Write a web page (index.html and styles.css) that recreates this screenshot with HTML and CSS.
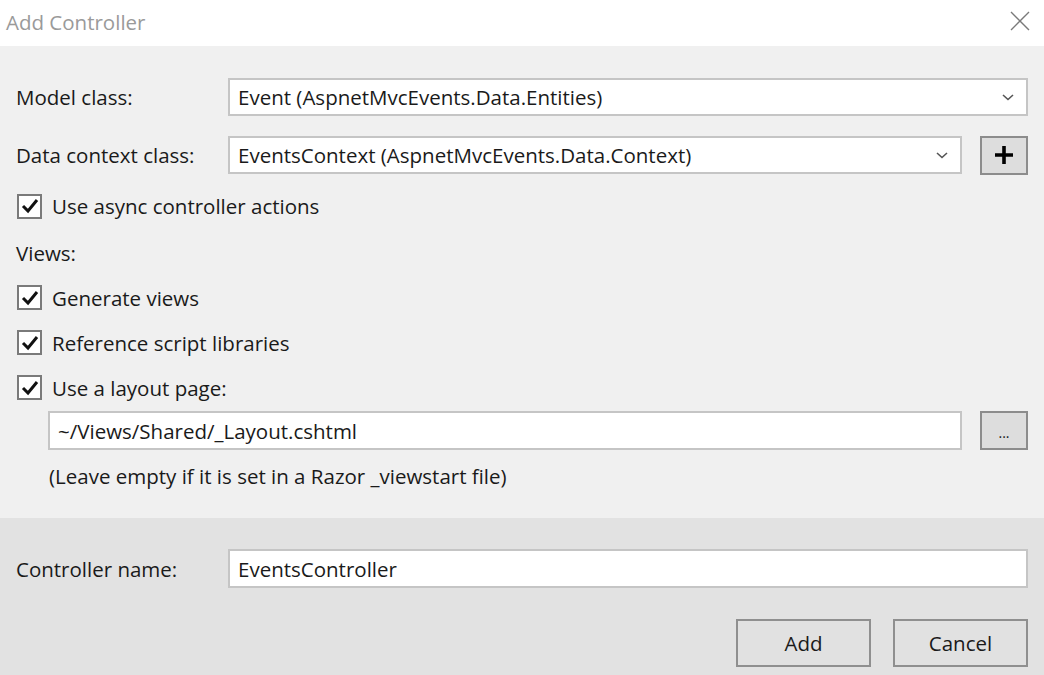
FILE: index.html
```html
<!DOCTYPE html>
<html>
<head>
<meta charset="utf-8">
<link rel="stylesheet" href="styles.css">
</head>
<body>
<div class="dialog">
  <div class="titlebar">
    <span class="title">Add Controller</span>
    <svg class="close" width="20" height="20" viewBox="0 0 20 20"><path d="M1 1 L19 19 M19 1 L1 19" stroke="#7a7a7a" stroke-width="1.4" fill="none"/></svg>
  </div>
  <div class="main">
    <div class="row field-row">
      <span class="label">Model class:</span>
      <div class="select grow"><span>Event (AspnetMvcEvents.Data.Entities)</span><svg class="chev" width="12" height="7" viewBox="0 0 12 7"><path d="M1 1 L6 5.5 L11 1" stroke="#555" stroke-width="1.6" fill="none"/></svg></div>
    </div>
    <div class="row field-row second">
      <span class="label">Data context class:</span>
      <div class="select grow"><span>EventsContext (AspnetMvcEvents.Data.Context)</span><svg class="chev" width="12" height="7" viewBox="0 0 12 7"><path d="M1 1 L6 5.5 L11 1" stroke="#555" stroke-width="1.6" fill="none"/></svg></div>
      <div class="sqbtn"><svg width="20" height="20" viewBox="0 0 20 20"><path d="M10 1 V19 M1 10 H19" stroke="#000" stroke-width="3.6" fill="none"/></svg></div>
    </div>
    <div class="check-row first"><span class="box"><svg width="18" height="16" viewBox="0 0 18 16"><path d="M2 8 L7 13 L16 2" stroke="#111" stroke-width="3" fill="none"/></svg></span><span>Use async controller actions</span></div>
    <div class="check-row"><span>Views:</span></div>
    <div class="check-row"><span class="box"><svg width="18" height="16" viewBox="0 0 18 16"><path d="M2 8 L7 13 L16 2" stroke="#111" stroke-width="3" fill="none"/></svg></span><span>Generate views</span></div>
    <div class="check-row"><span class="box"><svg width="18" height="16" viewBox="0 0 18 16"><path d="M2 8 L7 13 L16 2" stroke="#111" stroke-width="3" fill="none"/></svg></span><span>Reference script libraries</span></div>
    <div class="check-row"><span class="box"><svg width="18" height="16" viewBox="0 0 18 16"><path d="M2 8 L7 13 L16 2" stroke="#111" stroke-width="3" fill="none"/></svg></span><span>Use a layout page:</span></div>
    <div class="row layout-row">
      <div class="input grow">~/Views/Shared/_Layout.cshtml</div>
      <div class="sqbtn dots">...</div>
    </div>
    <div class="hint">(Leave empty if it is set in a Razor _viewstart file)</div>
  </div>
  <div class="footer">
    <div class="row field-row">
      <span class="label">Controller name:</span>
      <div class="input grow">EventsController</div>
    </div>
    <div class="buttons">
      <div class="btn">Add</div>
      <div class="btn">Cancel</div>
    </div>
  </div>
</div>
</body>
</html>
```
FILE: styles.css
```css
html, body {
  margin: 0;
  padding: 0;
  width: 1044px;
  height: 675px;
  overflow: hidden;
  font-family: "Open Sans", "Noto Sans", sans-serif;
  font-size: 20.5px;
  color: #1a1a1a;
}
.dialog {
  display: flex;
  flex-direction: column;
  height: 675px;
}
.titlebar {
  height: 46px;
  background: #fff;
  display: flex;
  align-items: center;
  justify-content: space-between;
  padding: 0 14px 0 6px;
  box-sizing: border-box;
}
.title {
  color: #9a9a9a;
  font-size: 20.5px;
  margin-top: -2px;
}
.close { margin-top: -4px; }
.main {
  background: #f0f0f0;
  height: 472px;
  box-sizing: border-box;
  padding: 32px 16px 0 16px;
  display: flex;
  flex-direction: column;
}
.row {
  display: flex;
  align-items: center;
}
.field-row { height: 38px; }
.field-row.second { margin-top: 20px; }
.label {
  width: 212px;
  flex: none;
}
.grow { flex: 1; }
.select, .input {
  height: 38px;
  box-sizing: border-box;
  background: #fff;
  border: 2px solid #c5c5c5;
  display: flex;
  align-items: center;
  padding: 0 8px 0 8px;
  justify-content: space-between;
  white-space: nowrap;
}
.chev { margin-right: 4px; }
.sqbtn {
  width: 48px;
  height: 39px;
  flex: none;
  margin-left: 18px;
  box-sizing: border-box;
  background: #dddddd;
  border: 2px solid #8c8c8c;
  display: flex;
  align-items: center;
  justify-content: center;
}
.check-row {
  height: 45px;
  display: flex;
  align-items: center;
}
.check-row.first {
  height: 48px;
  margin-top: 8px;
}
.box {
  width: 25px;
  height: 25px;
  box-sizing: border-box;
  border: 2px solid #7a7a7a;
  background: #fff;
  margin-left: 1px;
  margin-right: 10px;
  display: flex;
  align-items: center;
  justify-content: center;
}
.layout-row {
  margin-top: 1px;
  margin-left: 32px;
  height: 39px;
}
.layout-row .input { height: 39px; }
.dots {
  font-size: 14px;
  align-items: flex-end;
  padding-bottom: 6px;
  letter-spacing: 0;
}
.hint {
  margin-top: 13px;
  margin-left: 33px;
  height: 26px;
  line-height: 26px;
}
.footer {
  flex: 1;
  background: #e2e2e2;
  box-sizing: border-box;
  padding: 31px 16px 0 16px;
}
.footer .field-row { height: 39px; }
.footer .input { height: 39px; }
.buttons {
  display: flex;
  justify-content: flex-end;
  gap: 22px;
  margin-top: 31px;
}
.btn {
  width: 135px;
  height: 48px;
  box-sizing: border-box;
  border: 2px solid #8f8f8f;
  background: #e1e1e1;
  display: flex;
  align-items: center;
  justify-content: center;
}
```
